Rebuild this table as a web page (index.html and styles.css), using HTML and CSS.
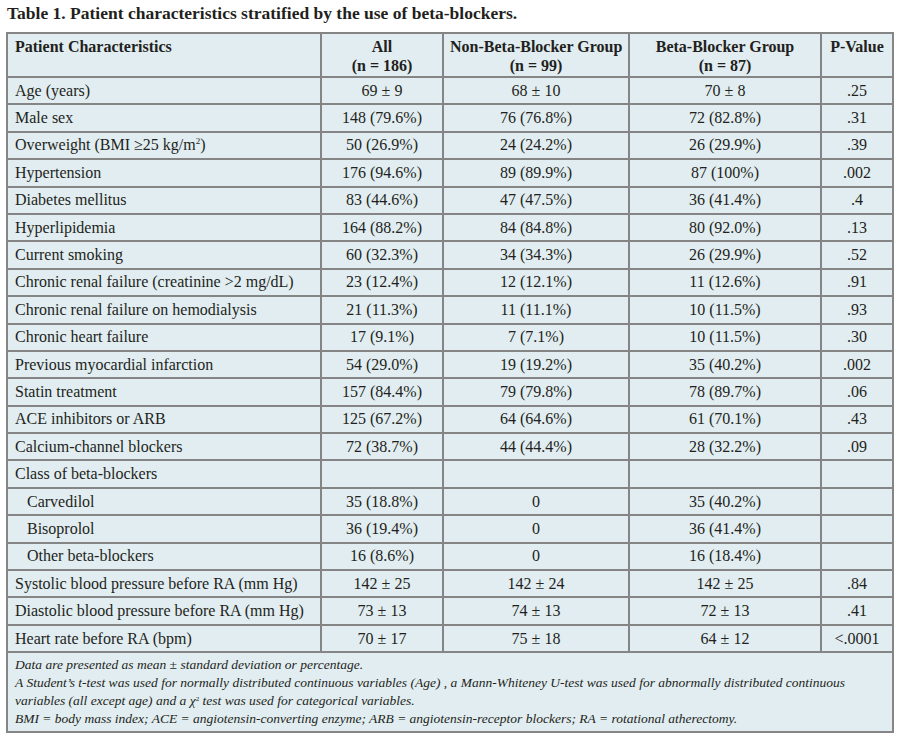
FILE: index.html
```html
<!DOCTYPE html>
<html>
<head>
<meta charset="utf-8">
<link rel="stylesheet" href="styles.css">
</head>
<body>
<div class="page">
  <h1 class="title">Table 1. Patient characteristics stratified by the use of beta-blockers.</h1>
  <table class="data">
    <colgroup>
      <col class="c1"><col class="c2"><col class="c3"><col class="c4"><col class="c5">
    </colgroup>
    <thead>
      <tr class="head">
        <th class="left">Patient Characteristics</th>
        <th>All<br>(n = 186)</th>
        <th>Non-Beta-Blocker Group<br>(n = 99)</th>
        <th>Beta-Blocker Group<br>(n = 87)</th>
        <th>P-Value</th>
      </tr>
    </thead>
    <tbody>
      <tr><td>Age (years)</td><td>69 ± 9</td><td>68 ± 10</td><td>70 ± 8</td><td>.25</td></tr>
      <tr><td>Male sex</td><td>148 (79.6%)</td><td>76 (76.8%)</td><td>72 (82.8%)</td><td>.31</td></tr>
      <tr><td>Overweight (BMI ≥25 kg/m<sup class="sq">2</sup>)</td><td>50 (26.9%)</td><td>24 (24.2%)</td><td>26 (29.9%)</td><td>.39</td></tr>
      <tr><td>Hypertension</td><td>176 (94.6%)</td><td>89 (89.9%)</td><td>87 (100%)</td><td>.002</td></tr>
      <tr><td>Diabetes mellitus</td><td>83 (44.6%)</td><td>47 (47.5%)</td><td>36 (41.4%)</td><td>.4</td></tr>
      <tr><td>Hyperlipidemia</td><td>164 (88.2%)</td><td>84 (84.8%)</td><td>80 (92.0%)</td><td>.13</td></tr>
      <tr><td>Current smoking</td><td>60 (32.3%)</td><td>34 (34.3%)</td><td>26 (29.9%)</td><td>.52</td></tr>
      <tr><td>Chronic renal failure (creatinine &gt;2 mg/dL)</td><td>23 (12.4%)</td><td>12 (12.1%)</td><td>11 (12.6%)</td><td>.91</td></tr>
      <tr><td>Chronic renal failure on hemodialysis</td><td>21 (11.3%)</td><td>11 (11.1%)</td><td>10 (11.5%)</td><td>.93</td></tr>
      <tr><td>Chronic heart failure</td><td>17 (9.1%)</td><td>7 (7.1%)</td><td>10 (11.5%)</td><td>.30</td></tr>
      <tr><td>Previous myocardial infarction</td><td>54 (29.0%)</td><td>19 (19.2%)</td><td>35 (40.2%)</td><td>.002</td></tr>
      <tr><td>Statin treatment</td><td>157 (84.4%)</td><td>79 (79.8%)</td><td>78 (89.7%)</td><td>.06</td></tr>
      <tr><td>ACE inhibitors or ARB</td><td>125 (67.2%)</td><td>64 (64.6%)</td><td>61 (70.1%)</td><td>.43</td></tr>
      <tr><td>Calcium-channel blockers</td><td>72 (38.7%)</td><td>44 (44.4%)</td><td>28 (32.2%)</td><td>.09</td></tr>
      <tr><td>Class of beta-blockers</td><td></td><td></td><td></td><td></td></tr>
      <tr><td class="indent">Carvedilol</td><td>35 (18.8%)</td><td>0</td><td>35 (40.2%)</td><td></td></tr>
      <tr><td class="indent">Bisoprolol</td><td>36 (19.4%)</td><td>0</td><td>36 (41.4%)</td><td></td></tr>
      <tr><td class="indent">Other beta-blockers</td><td>16 (8.6%)</td><td>0</td><td>16 (18.4%)</td><td></td></tr>
      <tr><td>Systolic blood pressure before RA (mm Hg)</td><td>142 ± 25</td><td>142 ± 24</td><td>142 ± 25</td><td>.84</td></tr>
      <tr><td>Diastolic blood pressure before RA (mm Hg)</td><td>73 ± 13</td><td>74 ± 13</td><td>72 ± 13</td><td>.41</td></tr>
      <tr><td>Heart rate before RA (bpm)</td><td>70 ± 17</td><td>75 ± 18</td><td>64 ± 12</td><td>&lt;.0001</td></tr>
    </tbody>
    <tfoot>
      <tr>
        <td colspan="5" class="notes">
          <p>Data are presented as mean ± standard deviation or percentage.</p>
          <p>A Student’s t-test was used for normally distributed continuous variables (Age) , a Mann-Whiteney U-test was used for abnormally distributed continuous<br>variables (all except age) and a χ<span class="chi2">2</span> test was used for categorical variables.</p>
          <p>BMI = body mass index; ACE = angiotensin-converting enzyme; ARB = angiotensin-receptor blockers; RA = rotational atherectomy.</p>
        </td>
      </tr>
    </tfoot>
  </table>
</div>
</body>
</html>
```
FILE: styles.css
```css
html, body {
  margin: 0;
  padding: 0;
  background: #ffffff;
}
.page {
  padding: 2px 5px 0 6px;
  font-family: "Liberation Serif", "Times New Roman", serif;
  color: #231f20;
}
.title {
  margin: 0 0 8px 1px;
  font-size: 17.5px;
  line-height: 22px;
  font-weight: bold;
}
.data {
  width: 886px;
  table-layout: fixed;
  border-collapse: collapse;
  background: #e1edf1;
  border: 2px solid #858585;
  font-size: 16px;
}
.c1 { width: 314px; }
.c2 { width: 122px; }
.c3 { width: 186px; }
.c4 { width: 192px; }
.c5 { width: 72px; }
.data th, .data td {
  border: 2px solid #858585;
  padding: 0 6px;
  text-align: center;
  vertical-align: middle;
  white-space: nowrap;
}
.data th {
  vertical-align: top;
  font-weight: bold;
  line-height: 19px;
  padding-top: 3px;
  padding-bottom: 1px;
}
.head { height: 43px; }
.data th.left { text-align: left; padding-left: 7px; }
.data tbody tr { height: 27.4px; }
.data tbody td:first-child { text-align: left; padding-left: 7px; }
.data tbody td.indent { padding-left: 19px; }
.sq {
  font-size: 9px;
  line-height: 0;
  vertical-align: 6px;
}
.data td.notes {
  text-align: left;
  white-space: nowrap;
  font-style: italic;
  font-size: 13.5px;
  line-height: 18px;
  padding: 3px 7px 3px 7px;
  vertical-align: top;
}
.notes p { margin: 0; }
.chi2 {
  font-size: 7px;
  line-height: 1;
  position: relative;
  top: -4px;
  font-style: normal;
}
```
